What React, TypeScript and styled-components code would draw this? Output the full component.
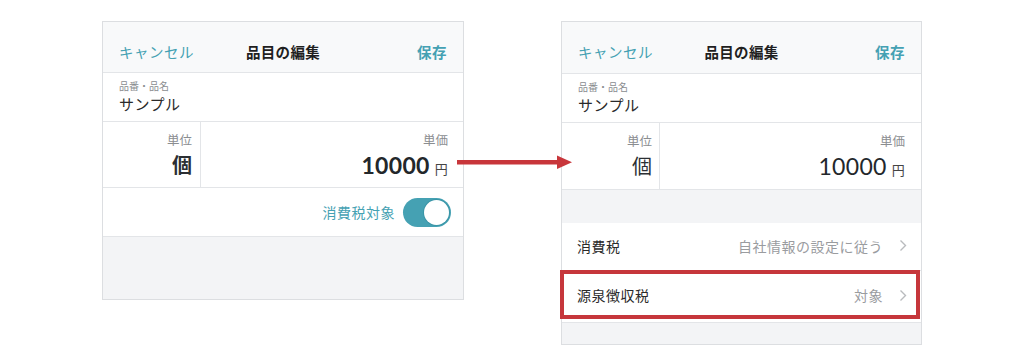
import React from 'react';
import styled, { createGlobalStyle } from 'styled-components';

const GlobalStyle = createGlobalStyle`
  html, body { margin: 0; padding: 0; background: #ffffff; }
  body {
    font-family: "Noto Sans CJK JP", "Noto Sans", sans-serif;
    -webkit-font-smoothing: antialiased;
  }
`;

const TEAL = '#45a1b3';
const LINE = '#e3e5e8';

const Stage = styled.div`
  position: relative;
  width: 1024px;
  height: 361px;
  display: flex;
  justify-content: center;
  align-items: flex-start;
  gap: 97px;
  padding-top: 21px;
  box-sizing: border-box;
`;

const Panel = styled.div<{ $w: number; $h: number }>`
  width: ${p => p.$w}px;
  height: ${p => p.$h}px;
  box-sizing: border-box;
  border: 1px solid #dcdee1;
  background: #f3f4f6;
  display: flex;
  flex-direction: column;
`;

const NavBar = styled.div<{ $h: number }>`
  height: ${p => p.$h}px;
  flex-shrink: 0;
  background: #f8f9fa;
  border-bottom: 1px solid ${LINE};
  display: grid;
  grid-template-columns: 1fr auto 1fr;
  align-items: center;
  padding: 8px 16px 0;
  box-sizing: border-box;
  font-size: 14.5px;
`;

const NavLink = styled.span<{ $right?: boolean; $bold?: boolean }>`
  color: ${TEAL};
  font-weight: ${p => (p.$bold ? 700 : 400)};
  justify-self: ${p => (p.$right ? 'end' : 'start')};
  letter-spacing: 0.5px;
`;

const NavTitle = styled.span`
  font-weight: 700;
  color: #1f1f1f;
  letter-spacing: 0.3px;
`;

const NameRow = styled.div<{ $h: number }>`
  height: ${p => p.$h}px;
  flex-shrink: 0;
  background: #fff;
  border-bottom: 1px solid ${LINE};
  padding: 6px 16px 0;
  box-sizing: border-box;
  display: flex;
  flex-direction: column;
`;

const SmallLabel = styled.span`
  font-size: 10px;
  color: #8a8d90;
  line-height: 14px;
`;

const NameValue = styled.span`
  font-size: 15px;
  color: #2a2a2a;
  line-height: 22px;
  letter-spacing: 0.5px;
`;

const PriceRow = styled.div<{ $h: number }>`
  height: ${p => p.$h}px;
  flex-shrink: 0;
  background: #fff;
  border-bottom: 1px solid ${LINE};
  display: grid;
  grid-template-columns: 98px 1fr;
  box-sizing: border-box;
`;

const Cell = styled.div<{ $divider?: boolean; $pr: number }>`
  border-right: ${p => (p.$divider ? `1px solid ${LINE}` : 'none')};
  display: flex;
  flex-direction: column;
  align-items: flex-end;
  padding: 9px ${p => p.$pr}px 0 0;
  box-sizing: border-box;
`;

const CellLabel = styled.span`
  font-size: 12.5px;
  color: #8a8d90;
  line-height: 18px;
`;

const Unit = styled.span<{ $bold?: boolean }>`
  font-size: 20px;
  font-weight: ${p => (p.$bold ? 700 : 400)};
  color: #2b2f33;
  line-height: 30px;
  margin-top: 1px;
`;

const Price = styled.span<{ $bold?: boolean }>`
  display: flex;
  align-items: baseline;
  gap: 5px;
  margin-top: 1px;
  line-height: 30px;
  font-family: "Lato", "Noto Sans", sans-serif;
  font-size: 23px;
  font-weight: ${p => (p.$bold ? 700 : 400)};
  color: #23272b;
  letter-spacing: 0.3px;
`;

const Yen = styled.span`
  font-family: "Noto Sans CJK JP", sans-serif;
  font-size: 13px;
  font-weight: 400;
  color: #444;
`;

const ToggleRow = styled.div`
  height: 49px;
  flex-shrink: 0;
  background: #fff;
  border-bottom: 1px solid ${LINE};
  display: flex;
  align-items: center;
  justify-content: flex-end;
  gap: 8px;
  padding-right: 12px;
  box-sizing: border-box;
`;

const ToggleLabel = styled.span`
  font-size: 14px;
  color: ${TEAL};
  letter-spacing: 0.5px;
`;

const Switch = styled.span`
  width: 48px;
  height: 29px;
  border-radius: 15px;
  background: ${TEAL};
  display: flex;
  align-items: center;
  justify-content: flex-end;
  padding-right: 2px;
  box-sizing: border-box;
`;

const Knob = styled.span`
  width: 25px;
  height: 25px;
  border-radius: 50%;
  background: #fff;
  box-shadow: 0 0 0 1px #3a95a7;
`;

const Spacer = styled.div<{ $h: number }>`
  height: ${p => p.$h}px;
  flex-shrink: 0;
`;

const ListRow = styled.div<{ $h: number; $highlight?: boolean }>`
  position: relative;
  height: ${p => p.$h}px;
  flex-shrink: 0;
  background: #fff;
  border-bottom: 1px solid ${LINE};
  display: flex;
  align-items: center;
  padding: ${p => (p.$highlight ? '0 14px 3px 15px' : '0 14px 2px 15px')};
  box-sizing: border-box;
  ${p =>
    p.$highlight &&
    `
    &::after {
      content: '';
      position: absolute;
      left: -2px;
      right: 1px;
      top: -1px;
      bottom: 3px;
      border: 4px solid #c6363b;
    }
  `}
`;

const RowTitle = styled.span`
  flex: 1;
  font-size: 14px;
  color: #2a2a2a;
  letter-spacing: 0.5px;
`;

const RowValue = styled.span`
  font-size: 14px;
  color: #9a9c9f;
  letter-spacing: 0.5px;
  margin-right: 16px;
`;

const Chevron = () => (
  <svg width="8" height="13" viewBox="0 0 8 13">
    <path d="M1.5 1.5 L6.5 6.5 L1.5 11.5" fill="none" stroke="#b9bbbe" strokeWidth="1.4" />
  </svg>
);

const Arrow = styled.svg`
  position: absolute;
  left: 457px;
  top: 154px;
`;

export default function App() {
  return (
    <>
      <GlobalStyle />
      <Stage>
        <Panel $w={362} $h={279}>
          <NavBar $h={51}>
            <NavLink>キャンセル</NavLink>
            <NavTitle>品目の編集</NavTitle>
            <NavLink $right $bold>保存</NavLink>
          </NavBar>
          <NameRow $h={49}>
            <SmallLabel>品番・品名</SmallLabel>
            <NameValue>サンプル</NameValue>
          </NameRow>
          <PriceRow $h={66}>
            <Cell $divider $pr={8}>
              <CellLabel>単位</CellLabel>
              <Unit $bold>個</Unit>
            </Cell>
            <Cell $pr={15}>
              <CellLabel>単価</CellLabel>
              <Price $bold>10000<Yen>円</Yen></Price>
            </Cell>
          </PriceRow>
          <ToggleRow>
            <ToggleLabel>消費税対象</ToggleLabel>
            <Switch><Knob /></Switch>
          </ToggleRow>
        </Panel>

        <Panel $w={361} $h={324}>
          <NavBar $h={52}>
            <NavLink>キャンセル</NavLink>
            <NavTitle>品目の編集</NavTitle>
            <NavLink $right $bold>保存</NavLink>
          </NavBar>
          <NameRow $h={49}>
            <SmallLabel>品番・品名</SmallLabel>
            <NameValue>サンプル</NameValue>
          </NameRow>
          <PriceRow $h={67}>
            <Cell $divider $pr={7}>
              <CellLabel>単位</CellLabel>
              <Unit>個</Unit>
            </Cell>
            <Cell $pr={16}>
              <CellLabel>単価</CellLabel>
              <Price>10000<Yen>円</Yen></Price>
            </Cell>
          </PriceRow>
          <Spacer $h={33} />
          <ListRow $h={48}>
            <RowTitle>消費税</RowTitle>
            <RowValue>自社情報の設定に従う</RowValue>
            <Chevron />
          </ListRow>
          <ListRow $h={52} $highlight>
            <RowTitle>源泉徴収税</RowTitle>
            <RowValue>対象</RowValue>
            <Chevron />
          </ListRow>
        </Panel>
      </Stage>
      <Arrow width="116" height="16" viewBox="0 0 116 16">
        <rect x="0" y="6" width="102" height="4.5" fill="#c8363b" />
        <polygon points="100,1.5 115,8.2 100,15" fill="#c8363b" />
      </Arrow>
    </>
  );
}
